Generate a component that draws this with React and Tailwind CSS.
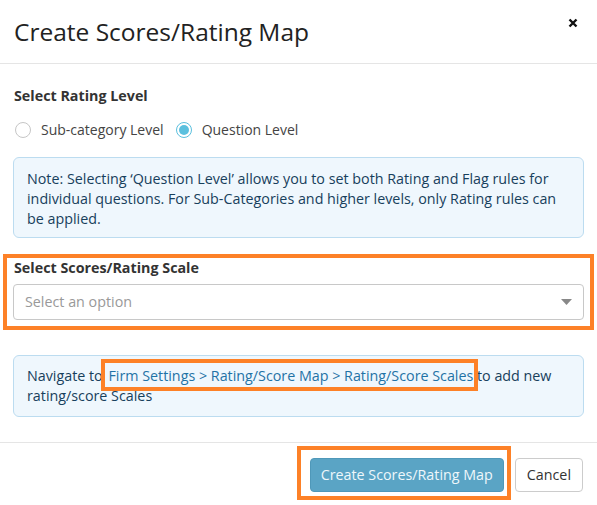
import React from "react";

function Radio({ checked, label }) {
  return (
    <label className="flex items-center gap-[10px] mr-[12px]">
      {checked ? (
        <span className="w-[16px] h-[16px] rounded-full border border-[#5bc0de] bg-white flex items-center justify-center">
          <span className="w-[10px] h-[10px] rounded-full bg-[#5bc0de]" />
        </span>
      ) : (
        <span className="w-[16px] h-[16px] rounded-full border border-[#c6c6c6] bg-white" />
      )}
      <span className="text-[14px] text-[#444]">{label}</span>
    </label>
  );
}

export default function App() {
  return (
    <div
      className="w-[597px] h-[505px] bg-white text-[#333] overflow-hidden"
      style={{ fontFamily: '"Open Sans", "Noto Sans", sans-serif' }}
    >
      <div className="h-[64px] border-b border-[#e5e5e5] flex items-center justify-between pl-[14px] pr-[19px]">
        <h1 className="text-[24.5px] leading-[32px] text-[#222]">Create Scores/Rating Map</h1>
        <svg width="10" height="10" viewBox="0 0 10 10" className="mb-[18px]">
          <path d="M1.5 1.5 L8.5 8.5 M8.5 1.5 L1.5 8.5" stroke="#111" strokeWidth="2.4" />
        </svg>
      </div>

      <div className="px-[13px] pt-[22px] pb-[25px] text-[14.3px] leading-[20px]">
        <div className="font-bold text-[#333] pl-[1px]">Select Rating Level</div>
        <div className="flex items-center mt-[14px] pl-[2px]">
          <Radio label="Sub-category Level" />
          <Radio checked label="Question Level" />
        </div>

        <div className="mt-[17px] border border-[#bcdcf0] bg-[#eff7fd] rounded-[6px] pl-[13px] pr-[12px] pt-[11px] pb-[8px] text-[#17405c]">
          Note: Selecting ‘Question Level’ allows you to set both Rating and Flag rules for individual questions. For Sub-Categories and higher levels, only Rating rules can be applied.
        </div>

        <div className="mt-[16px] -mx-[10px] border-4 border-[#fd8127] px-[6px] pb-[6px]">
          <div className="font-bold text-[#333] pl-[1px]">Select Scores/Rating Scale</div>
          <div className="mt-[6px] h-[36px] border border-[#c8c8c8] rounded-[4px] flex items-center justify-between pl-[11px] pr-[11px]">
            <span className="text-[#999]">Select an option</span>
            <svg width="11" height="6" viewBox="0 0 11 6">
              <path d="M0 0 H11 L5.5 6 Z" fill="#888" />
            </svg>
          </div>
        </div>

        <div className="relative mt-[25px] border border-[#bcdcf0] bg-[#eff7fd] rounded-[6px] pl-[13px] pr-[12px] py-[10px] text-[#17405c]">
          <p>
            Navigate to <span className="ml-[2px] text-[#1f73a6]">Firm Settings &gt; Rating/Score Map &gt; Rating/Score Scales</span> to add new rating/score Scales
          </p>
          <div className="absolute left-[87px] top-[3px] w-[377px] h-[32px] border-4 border-[#fd8127]" />
        </div>
      </div>

      <div className="border-t border-[#e5e5e5] flex justify-end pt-[15px] pr-[14px] gap-[11px]">
        <div className="relative">
          <button className="h-[34px] px-[10px] rounded-[4px] bg-[#5aa4c5] border border-[#4f98b9] text-[14.3px] text-[#eef7fb]">
            Create Scores/Rating Map
          </button>
          <div className="absolute -left-[13px] -top-[12px] -right-[7px] -bottom-[8px] border-4 border-[#fd8127]" />
        </div>
        <button className="h-[34px] px-[11px] rounded-[4px] bg-white border border-[#ccc] text-[14.3px] text-[#333]">
          Cancel
        </button>
      </div>
    </div>
  );
}
